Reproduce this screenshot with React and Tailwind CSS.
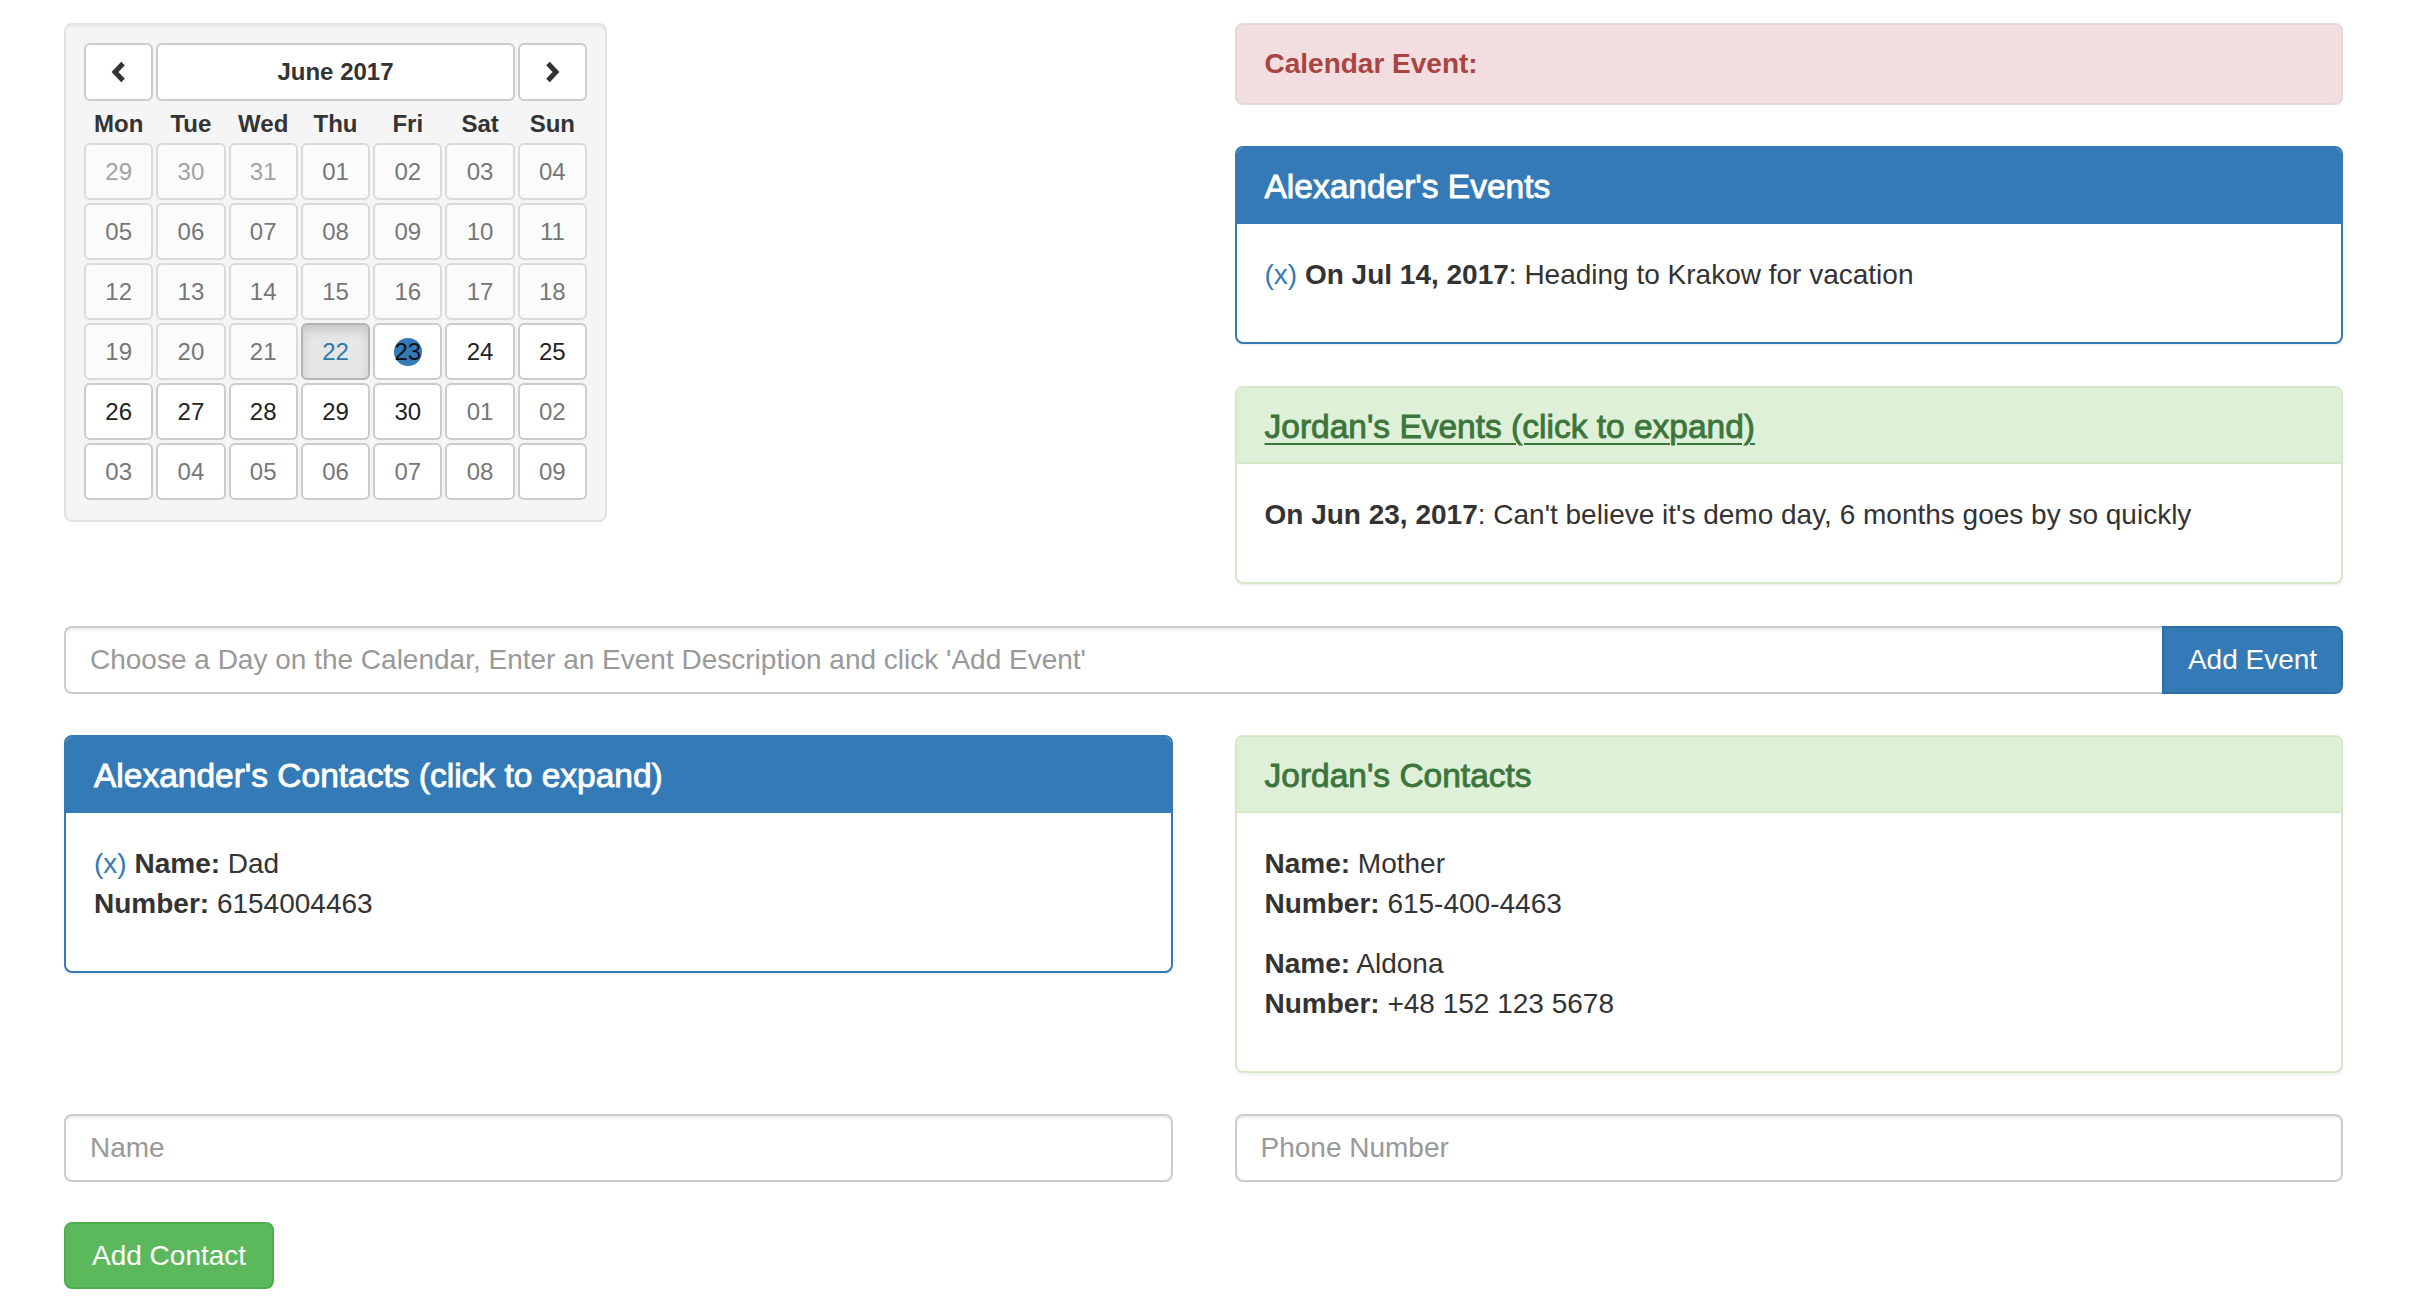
import React from "react";

const rows = [
  [["29", "dm"], ["30", "dm"], ["31", "dm"], ["01", "d"], ["02", "d"], ["03", "d"], ["04", "d"]],
  [["05", "d"], ["06", "d"], ["07", "d"], ["08", "d"], ["09", "d"], ["10", "d"], ["11", "d"]],
  [["12", "d"], ["13", "d"], ["14", "d"], ["15", "d"], ["16", "d"], ["17", "d"], ["18", "d"]],
  [["19", "d"], ["20", "d"], ["21", "d"], ["22", "a"], ["23", "s"], ["24", "n"], ["25", "n"]],
  [["26", "n"], ["27", "n"], ["28", "n"], ["29", "n"], ["30", "n"], ["01", "m"], ["02", "m"]],
  [["03", "m"], ["04", "m"], ["05", "m"], ["06", "m"], ["07", "m"], ["08", "m"], ["09", "m"]],
];

const kindClass = {
  dm: "bg-white border-[#ccc] text-[#777] opacity-65",
  d: "bg-white border-[#ccc] text-[#333] opacity-65",
  a: "bg-[#e6e6e6] border-[#b4b4b4] text-[#2f78ad] shadow-[inset_0_6px_10px_rgba(0,0,0,0.125)]",
  s: "bg-white border-[#ccc] text-[#111]",
  n: "bg-white border-[#ccc] text-[#222]",
  m: "bg-white border-[#ccc] text-[#777]",
};

function Chevron({ dir }) {
  return (
    <svg width="18" height="22" viewBox="0 0 18 22" fill="none">
      <path
        d={dir === "left" ? "M13 2.5 L5 11 L13 19.5" : "M5 2.5 L13 11 L5 19.5"}
        stroke="#333"
        strokeWidth="5"
        strokeLinecap="butt"
        strokeLinejoin="miter"
      />
    </svg>
  );
}

function Calendar() {
  const days = ["Mon", "Tue", "Wed", "Thu", "Fri", "Sat", "Sun"];
  return (
    <div className="w-[543px] rounded-[8px] border-2 border-[#e3e3e3] bg-[#f5f5f5] px-[18px] pt-[18px] pb-[20px] shadow-[inset_0_2px_2px_rgba(0,0,0,0.05)]">
      <div className="grid grid-cols-7 gap-x-[3px] h-[58px]">
        <button className="col-span-1 flex items-center justify-center rounded-[6px] border-2 border-[#ccc] bg-white">
          <Chevron dir="left" />
        </button>
        <button className="col-span-5 flex items-center justify-center rounded-[6px] border-2 border-[#ccc] bg-white text-[24px] font-bold text-[#333]">
          June 2017
        </button>
        <button className="col-span-1 flex items-center justify-center rounded-[6px] border-2 border-[#ccc] bg-white">
          <Chevron dir="right" />
        </button>
      </div>
      <div className="grid grid-cols-7 gap-x-[3px] h-[42px] items-center pt-[3px]">
        {days.map((d) => (
          <div key={d} className="text-center text-[24px] font-bold text-[#333] leading-[28px]">
            {d}
          </div>
        ))}
      </div>
      <div className="grid grid-cols-7 gap-[3px]">
        {rows.flat().map(([d, k], i) => (
          <div
            key={i}
            className={
              "h-[57px] flex items-center justify-center rounded-[6px] border-2 text-[24px] " +
              kindClass[k]
            }
          >
            {k === "s" ? (
              <span className="flex h-[28px] w-[28px] items-center justify-center rounded-full bg-[#337ab7]">
                {d}
              </span>
            ) : (
              d
            )}
          </div>
        ))}
      </div>
    </div>
  );
}

function Panel({ variant, title, underline, children }) {
  const primary = variant === "primary";
  return (
    <div
      className={
        "overflow-hidden rounded-[8px] border-2 bg-white shadow-[0_2px_2px_rgba(0,0,0,0.05)] " +
        (primary ? "border-[#337ab7]" : "border-[#d6e9c6]")
      }
    >
      <div
        className={
          "border-b-2 px-[28px] pt-[22px] pb-[18px] " +
          (primary
            ? "bg-[#337ab7] border-[#337ab7] text-white"
            : "bg-[#dff0d8] border-[#d6e9c6] text-[#3c763d]")
        }
      >
        <h3
          className={
            "text-[33.5px] leading-[34px] [-webkit-text-stroke:0.9px_currentColor] " +
            (underline ? "underline decoration-2 underline-offset-[5px]" : "")
          }
        >
          {title}
        </h3>
      </div>
      <div className="px-[28px] pt-[31px] pb-[27px]">{children}</div>
    </div>
  );
}

function X() {
  return <span className="text-[#337ab7]">(x) </span>;
}

export default function App() {
  return (
    <div className="min-h-[1302px] bg-white text-[28px] leading-[40px] text-[#333] font-['Liberation_Sans',Arial,Helvetica,sans-serif]">
      <div className="w-[2343px] pl-[64px] pt-[23px]">
        <div className="grid grid-cols-2 gap-x-[62px] items-start">
          <div>
            <Calendar />
          </div>
          <div>
            <div className="mb-[41px] flex h-[82px] items-center rounded-[8px] border-2 border-[#e2d8d9] bg-[#f2dede] px-[28px]">
              <span className="font-bold text-[#a94442]">Calendar Event:</span>
            </div>
            <div className="mb-[42px]">
              <Panel variant="primary" title="Alexander's Events">
                <p className="mb-[20px]">
                  <X />
                  <b>On Jul 14, 2017</b>: Heading to Krakow for vacation
                </p>
              </Panel>
            </div>
            <Panel variant="success" title="Jordan's Events (click to expand)" underline>
              <p className="mb-[20px]">
                <b>On Jun 23, 2017</b>: Can't believe it's demo day, 6 months goes by so quickly
              </p>
            </Panel>
          </div>
        </div>

        <div className="mt-[42px] flex h-[68px]">
          <input
            className="h-full flex-1 rounded-l-[8px] border-2 border-r-0 border-[#ccc] bg-white px-[24px] text-[28px] text-[#555] placeholder:text-[#999] shadow-[inset_0_2px_2px_rgba(0,0,0,0.075)] outline-none"
            placeholder="Choose a Day on the Calendar, Enter an Event Description and click 'Add Event'"
          />
          <button className="h-full w-[181px] rounded-r-[8px] border-2 border-[#2e6da4] bg-[#337ab7] text-[28px] text-white">
            Add Event
          </button>
        </div>

        <div className="mt-[41px] grid grid-cols-2 gap-x-[62px] items-start">
          <Panel variant="primary" title="Alexander's Contacts (click to expand)">
            <p className="mb-[20px]">
              <X />
              <b>Name:</b> Dad
              <br />
              <b>Number:</b> 6154004463
            </p>
          </Panel>
          <Panel variant="success" title="Jordan's Contacts">
            <p className="mb-[20px]">
              <b>Name:</b> Mother
              <br />
              <b>Number:</b> 615-400-4463
            </p>
            <p className="mb-[20px]">
              <b>Name:</b> Aldona
              <br />
              <b>Number:</b> +48 152 123 5678
            </p>
          </Panel>
        </div>

        <div className="mt-[41px] grid grid-cols-2 gap-x-[62px]">
          <input
            className="h-[68px] rounded-[8px] border-2 border-[#ccc] bg-white px-[24px] text-[28px] placeholder:text-[#999] shadow-[inset_0_2px_2px_rgba(0,0,0,0.075)] outline-none"
            placeholder="Name"
          />
          <input
            className="h-[68px] rounded-[8px] border-2 border-[#ccc] bg-white px-[24px] text-[28px] placeholder:text-[#999] shadow-[inset_0_2px_2px_rgba(0,0,0,0.075)] outline-none"
            placeholder="Phone Number"
          />
        </div>

        <button className="mt-[40px] h-[67px] rounded-[8px] border-2 border-[#4cae4c] bg-[#5cb85c] px-[26px] text-[28px] text-white">
          Add Contact
        </button>
      </div>
    </div>
  );
}
